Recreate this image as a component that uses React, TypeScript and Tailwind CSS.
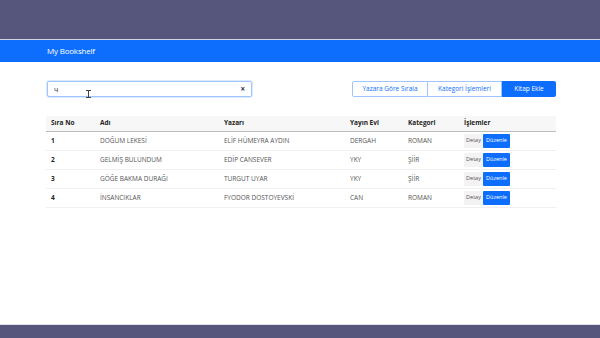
import React from 'react';

interface Book {
  no: number;
  title: string;
  author: string;
  publisher: string;
  category: string;
}

const books: Book[] = [
  { no: 1, title: 'DOĞUM LEKESİ', author: 'ELİF HÜMEYRA AYDIN', publisher: 'DERGAH', category: 'ROMAN' },
  { no: 2, title: 'GELMİŞ BULUNDUM', author: 'EDİP CANSEVER', publisher: 'YKY', category: 'ŞİİR' },
  { no: 3, title: 'GÖĞE BAKMA DURAĞI', author: 'TURGUT UYAR', publisher: 'YKY', category: 'ŞİİR' },
  { no: 4, title: 'İNSANCIKLAR', author: 'FYODOR DOSTOYEVSKİ', publisher: 'CAN', category: 'ROMAN' },
];

const App: React.FC = () => {
  return (
    <div className="w-[600px] h-[338px] flex flex-col bg-white overflow-hidden" style={{ fontFamily: '"Open Sans", "Noto Sans", sans-serif' }}>
      <div className="h-[39px] bg-[#56557b]"></div>
      <div className="h-px bg-[#d4d4e0]"></div>
      <nav className="h-[22px] bg-[#0d6efd] flex items-center pl-[47px]">
        <span className="text-white text-[8px] tracking-tight">My Bookshelf</span>
      </nav>

      <main className="flex-1 pl-[46px] pr-[44px] pt-[19px]">
        <div className="flex items-center justify-between h-[16px]">
          <div className="relative w-[205px] h-[16px] ml-px border border-[#9ec5fe] rounded-[2px] shadow-[0_0_0_1px_rgba(13,110,253,0.15)] flex items-center px-[6px]">
            <span className="text-[7px] text-gray-800 leading-none">ч</span>
            {/* text cursor over the field */}
            <span className="absolute left-[40px] top-[8px] h-[8px] w-px bg-[#444]"></span>
            <span className="absolute left-[38px] top-[8px] h-px w-[5px] bg-[#444]"></span>
            <span className="absolute left-[38px] top-[15px] h-px w-[5px] bg-[#444]"></span>
            <span className="ml-auto text-[8px] text-[#1f2d4d] font-bold leading-none">×</span>
          </div>
          <div className="flex h-[16px] text-[6.5px]">
            <button className="w-[76px] border border-[#9ec5fe] rounded-l-[2px] text-[#0d6efd] bg-white">Yazara Göre Sırala</button>
            <button className="w-[74px] border border-l-0 border-[#9ec5fe] text-[#0d6efd] bg-white">Kategori İşlemleri</button>
            <button className="w-[54px] bg-[#0d6efd] text-white rounded-r-[2px]">Kitap Ekle</button>
          </div>
        </div>

        <table className="mt-[19px] w-[510px] border-collapse text-left">
          <thead>
            <tr className="h-[15px] bg-[#f7f7f7] border-b-[1.5px] border-[#bcbcbc] text-[6.5px] font-bold text-[#222]">
              <th className="pl-[5px] w-[54px] font-bold">Sıra No</th>
              <th className="w-[124px] font-bold">Adı</th>
              <th className="w-[126px] font-bold">Yazarı</th>
              <th className="w-[58px] font-bold">Yayın Evi</th>
              <th className="w-[56px] font-bold">Kategori</th>
              <th className="font-bold">İşlemler</th>
            </tr>
          </thead>
          <tbody>
            {books.map(b => (
              <tr key={b.no} className="h-[19px] border-b border-[#efefef] text-[6.5px] text-[#555]">
                <td className="pl-[5px] font-bold text-[#222]">{b.no}</td>
                <td>{b.title}</td>
                <td>{b.author}</td>
                <td>{b.publisher}</td>
                <td>{b.category}</td>
                <td>
                  <div className="flex items-center">
                    <button className="h-[14px] w-[19px] bg-[#f3f3f3] text-[#555] text-[5.5px]">Detay</button>
                    <button className="h-[14px] w-[27px] bg-[#0d6efd] text-white text-[5.5px] rounded-[1px]">Düzenle</button>
                  </div>
                </td>
              </tr>
            ))}
          </tbody>
        </table>
      </main>

      <div className="h-px bg-[#e0e0e8]"></div>
      <div className="h-[13px] bg-[#56557b]"></div>
    </div>
  );
};

export default App;
